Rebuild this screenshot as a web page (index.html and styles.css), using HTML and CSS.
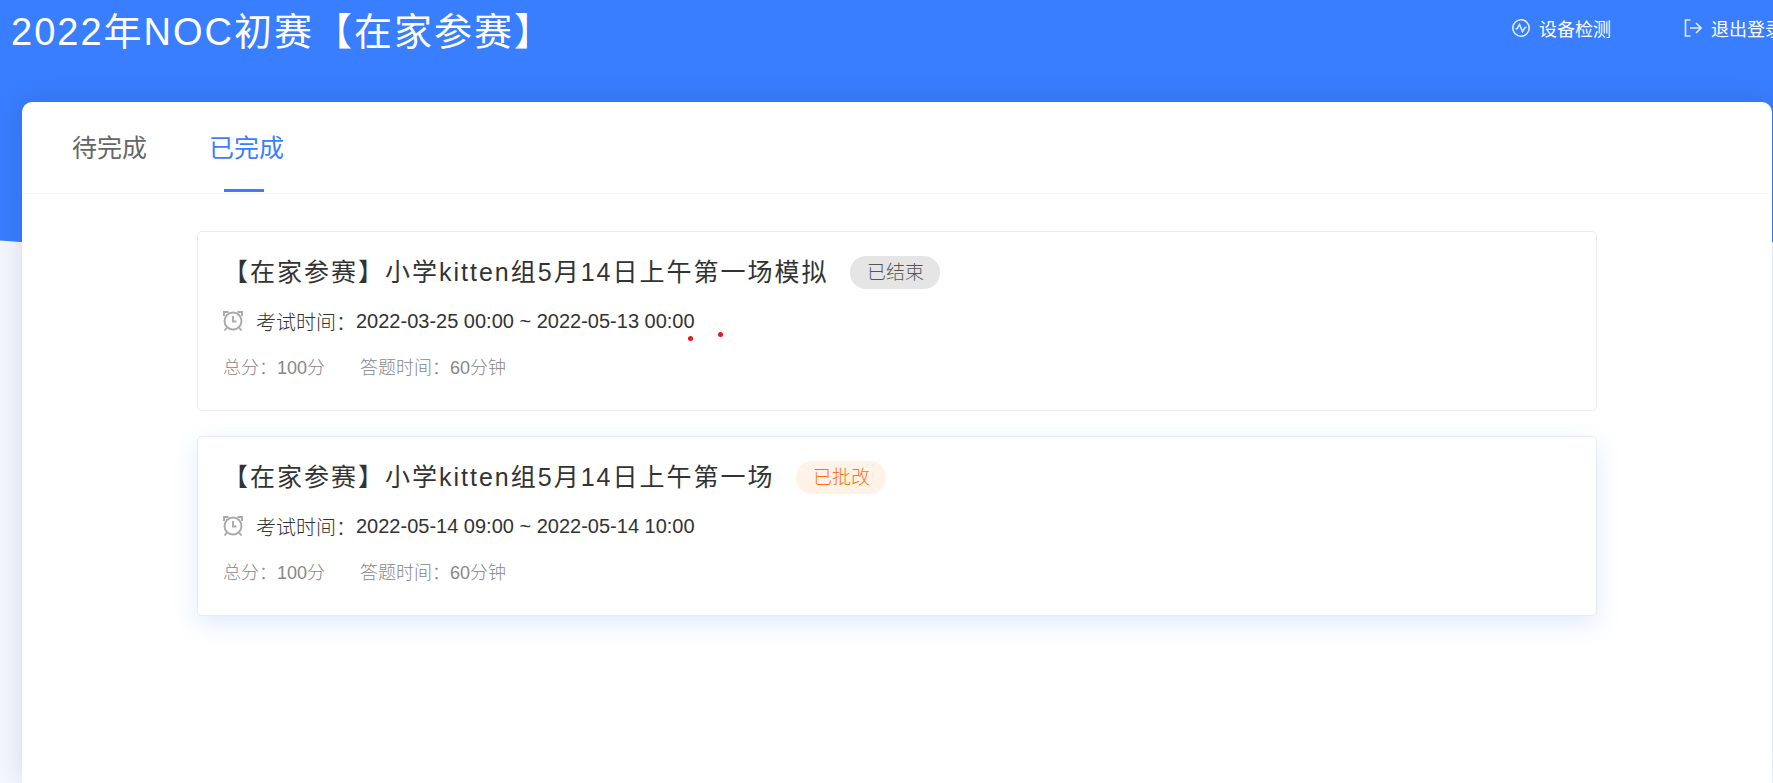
FILE: index.html
```html
<!DOCTYPE html>
<html lang="zh-CN">
<head>
<meta charset="utf-8">
<title>2022年NOC初赛【在家参赛】</title>
<link rel="stylesheet" href="styles.css">
</head>
<body>
<div class="page">
  <header class="header">
    <h1 class="header-title">2022年NOC初赛【在家参赛】</h1>
    <nav class="header-nav">
      <a class="nav-link" href="#">
        <svg class="nav-icon" viewBox="0 0 18 18"><circle cx="9" cy="9" r="8.2"/><path d="M3.500 9.800h1.500l2.500-4.300 3 7 2.500-4h1.500"/></svg>
        设备检测
      </a>
      <a class="nav-link" href="#">
        <svg class="nav-icon" viewBox="0 0 18 18"><path d="M6.500 1H1.500v16h5M6 9h10.500M12 4l5 5-5 5"/></svg>
        退出登录
      </a>
    </nav>
  </header>

  <main class="panel">
    <div class="tabs">
      <button class="tab" type="button">待完成</button>
      <button class="tab active" type="button">已完成</button>
    </div>

    <div class="exam-list">
      <section class="exam-card">
        <div class="exam-head">
          <h2 class="exam-title">【在家参赛】小学kitten组5月14日上午第一场模拟</h2>
          <span class="badge badge-end">已结束</span>
        </div>
        <div class="exam-time">
          <svg class="clock" viewBox="0 0 20 20"><circle cx="10" cy="10" r="8.500"/><path d="M10 5v5.500h3.500M1 5V1h4.500M19 5V1h-4.500M4 16.500l-2.500 3M16 16.500l2.500 3"/></svg>
          <span class="time-label">考试时间：</span>
          <span class="time-value">2022-03-25 00:00 ~ 2022-05-13 00:00<i class="dot dot-near"></i><i class="dot dot-far"></i></span>
        </div>
        <div class="exam-info">
          <span>总分：100分</span>
          <span>答题时间：60分钟</span>
        </div>
      </section>

      <section class="exam-card raised">
        <div class="exam-head">
          <h2 class="exam-title">【在家参赛】小学kitten组5月14日上午第一场</h2>
          <span class="badge badge-checked">已批改</span>
        </div>
        <div class="exam-time">
          <svg class="clock" viewBox="0 0 20 20"><circle cx="10" cy="10" r="8.500"/><path d="M10 5v5.500h3.500M1 5V1h4.500M19 5V1h-4.500M4 16.500l-2.500 3M16 16.500l2.500 3"/></svg>
          <span class="time-label">考试时间：</span>
          <span class="time-value">2022-05-14 09:00 ~ 2022-05-14 10:00</span>
        </div>
        <div class="exam-info">
          <span>总分：100分</span>
          <span>答题时间：60分钟</span>
        </div>
      </section>
    </div>
  </main>
</div>
</body>
</html>
```
FILE: styles.css
```css
* {
  box-sizing: border-box;
}

body {
  margin: 0;
  font-family: "Liberation Sans", "Noto Sans CJK SC", sans-serif;
  color: #333;
  background: #f4f7ff;
  overflow-x: hidden;
}

/* the page runs a little past the right edge of the window */
.page {
  position: relative;
  width: calc(100% + 21px);
  min-height: 100vh;
  padding: 0 22px;
  display: flex;
  flex-direction: column;
  overflow: hidden;
}

/* blue backdrop with a curved bottom */
.page::before {
  content: "";
  position: absolute;
  z-index: -1;
  top: 0;
  left: -200px;
  right: -200px;
  height: 266px;
  background: #397eff;
  border-radius: 0 0 50% 50% / 0 0 60px 60px;
}

.header {
  display: flex;
  justify-content: space-between;
  height: 102px;
  margin: 0 -11px;
  color: #fff;
}

.header-title {
  margin: 0;
  font-size: 38px;
  font-weight: 400;
  line-height: 64px;
  letter-spacing: 2px;
  white-space: nowrap;
}

.header-nav {
  display: flex;
  gap: 73px;
  height: 56px;
}

.nav-link {
  display: flex;
  align-items: center;
  gap: 9px;
  font-size: 18px;
  color: #fff;
  text-decoration: none;
  white-space: nowrap;
}

.nav-icon {
  width: 18px;
  height: 18px;
  fill: none;
  stroke: #fff;
  stroke-width: 1.6;
  opacity: 0.85;
}

.panel {
  flex: 1;
  background: #fff;
  border-radius: 10px 10px 0 0;
  box-shadow: 0 0 30px rgba(0, 0, 0, 0.12);
}

.tabs {
  display: flex;
  gap: 62px;
  height: 92px;
  padding: 0 50px;
  border-bottom: 1px solid #f5f6fa;
}

.tab {
  position: relative;
  padding: 0 0 4px;
  border: none;
  background: none;
  font-family: inherit;
  font-size: 25px;
  font-weight: 400;
  color: #666;
  cursor: pointer;
}

.tab.active {
  color: #397eff;
}

.tab.active::after {
  content: "";
  position: absolute;
  left: 15px;
  bottom: 1px;
  width: 40px;
  height: 3px;
  background: #397eff;
}

.exam-list {
  width: 80%;
  margin: 0 auto;
  padding: 37px 0;
  display: flex;
  flex-direction: column;
  gap: 25px;
}

.exam-card {
  padding: 24px 25px 28px;
  border: 1px solid #ebebeb;
  border-radius: 5px;
  background: #fff;
}

.exam-card.raised {
  box-shadow: 0 8px 24px rgba(57, 126, 255, 0.16);
}

.exam-head {
  display: flex;
  align-items: center;
  gap: 22px;
}

.exam-title {
  margin: 0;
  font-size: 25px;
  font-weight: 400;
  line-height: 33px;
  letter-spacing: 2px;
}

.badge {
  width: 90px;
  border-radius: 16px;
  font-size: 19px;
  font-weight: 300;
  line-height: 33px;
  text-align: center;
}

.badge-end {
  background: #e5e5e5;
  color: #555;
}

.badge-checked {
  background: #fff2e6;
  color: #ff7214;
}

.exam-time {
  display: flex;
  align-items: center;
  height: 34px;
  margin-top: 15px;
  font-size: 20px;
  font-weight: 300;
}

.clock {
  width: 20px;
  height: 20px;
  margin-right: 13px;
  fill: none;
  stroke: #aaa;
  stroke-width: 1.9;
}

.time-value {
  position: relative;
}

.dot {
  position: absolute;
  width: 5px;
  height: 5px;
  border-radius: 50%;
  background: #e8191c;
}

.dot-near {
  right: 2px;
  bottom: -8px;
}

.dot-far {
  right: -28px;
  bottom: -4px;
}

.exam-info {
  display: flex;
  gap: 35px;
  margin-top: 16px;
  font-size: 18px;
  font-weight: 300;
  line-height: 28px;
  color: #888;
}
```
